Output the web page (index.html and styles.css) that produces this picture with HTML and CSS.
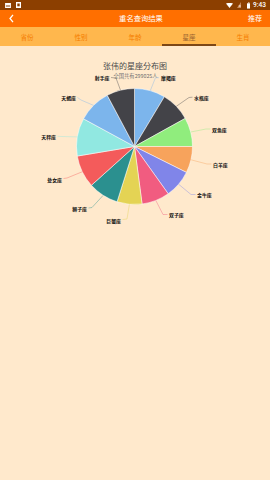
FILE: index.html
```html
<!DOCTYPE html>
<html lang="zh">
<head>
<meta charset="utf-8">
<title>重名查询结果</title>
<link rel="stylesheet" href="styles.css">
</head>
<body>
<div class="app">
  <div class="status">
    <div class="status-left">
      <svg class="ico-a" viewBox="0 0 7 6"><rect x="0" y="0" width="7" height="6" fill="#fff"/><rect x="1" y="3" width="5" height="1.2" fill="#8c3f00"/></svg>
      <svg class="ico-b" viewBox="0 0 5 6"><rect x="0" y="0" width="5" height="6" fill="#fff"/><rect x="1.3" y="1.5" width="2.4" height="2.8" fill="#8c3f00"/></svg>
    </div>
    <div class="status-right">
      <svg class="wifi" viewBox="0 0 7 5"><path d="M0 0.6 Q3.5 -1 7 0.6 L3.5 5 Z" fill="#fff"/></svg>
      <svg class="signal" viewBox="0 0 4 6"><path d="M4 0 L4 6 L0 6 Z" fill="#c98a5a"/><path d="M1.8 3 L3.6 5 M3.6 3 L1.8 5" stroke="#fff" stroke-width="0.5"/></svg>
      <svg class="battery" viewBox="0 0 4 7"><rect x="1.2" y="0" width="1.6" height="1" fill="#fff"/><rect x="0" y="1" width="4" height="6" fill="#fff"/></svg>
      <span class="clock">9:43</span>
    </div>
  </div>
  <div class="toolbar">
    <svg class="back" viewBox="0 0 5 9"><path d="M4 0.8 L1 4.5 L4 8.2" fill="none" stroke="#fff" stroke-width="1.3"/></svg>
    <div class="tb-title">重名查询结果</div>
    <div class="tb-action">推荐</div>
  </div>
  <div class="tabs">
    <div class="tab">省份</div>
    <div class="tab">性别</div>
    <div class="tab">年龄</div>
    <div class="tab active">星座</div>
    <div class="tab">生肖</div>
  </div>
  <svg class="chart" viewBox="0 46 270 200" width="270" height="200">
    <text class="c-title" x="135" y="65.7">张伟的星座分布图</text>
    <text class="c-sub" x="135.5" y="75.7">全国共有299025人</text>
    <g class="slices">
      <path d="M134.5 146.5 L134.5 88.5 A58 58 0 0 1 164.37 96.78 Z" fill="#7cb5ec"/>
      <path d="M134.5 146.5 L164.37 96.78 A58 58 0 0 1 185.23 118.38 Z" fill="#434348"/>
      <path d="M134.5 146.5 L185.23 118.38 A58 58 0 0 1 192.5 146.5 Z" fill="#90ed7d"/>
      <path d="M134.5 146.5 L192.5 146.5 A58 58 0 0 1 186.41 172.38 Z" fill="#f7a35c"/>
      <path d="M134.5 146.5 L186.41 172.38 A58 58 0 0 1 168.18 193.72 Z" fill="#8085e9"/>
      <path d="M134.5 146.5 L168.18 193.72 A58 58 0 0 1 142.07 204.0 Z" fill="#f15c80"/>
      <path d="M134.5 146.5 L142.07 204.0 A58 58 0 0 1 117.06 201.81 Z" fill="#e4d354"/>
      <path d="M134.5 146.5 L117.06 201.81 A58 58 0 0 1 91.4 185.31 Z" fill="#2b908f"/>
      <path d="M134.5 146.5 L91.4 185.31 A58 58 0 0 1 77.3 156.07 Z" fill="#f45b5b"/>
      <path d="M134.5 146.5 L77.3 156.07 A58 58 0 0 1 83.53 118.82 Z" fill="#91e8e1"/>
      <path d="M134.5 146.5 L83.53 118.82 A58 58 0 0 1 107.27 95.29 Z" fill="#7cb5ec"/>
      <path d="M134.5 146.5 L107.27 95.29 A58 58 0 0 1 134.5 88.5 Z" fill="#434348"/>
    </g>
    <g class="connectors">
      <polyline points="159,77.7 155.5,77.7 150.3,90.6" stroke="#7cb5ec"/>
      <polyline points="192.5,97.2 189,97.5 176.3,106.3" stroke="#434348"/>
      <polyline points="210.5,129 206,129 190.8,132" stroke="#90ed7d"/>
      <polyline points="211.5,164 207,164 191,159.8" stroke="#f7a35c"/>
      <polyline points="195.5,194.5 191,194.5 178.7,184.3" stroke="#8085e9"/>
      <polyline points="167.5,214.5 163,214.5 155.9,200.6" stroke="#f15c80"/>
      <polyline points="122.5,219.5 127,219 129.4,204.4" stroke="#e4d354"/>
      <polyline points="88.5,208 92,207.5 103.1,195.4" stroke="#2b908f"/>
      <polyline points="63.5,178.5 67,178 82.2,171.8" stroke="#f45b5b"/>
      <polyline points="57.5,136.3 62,136.5 77.3,136.9" stroke="#91e8e1"/>
      <polyline points="77.5,97.5 81,100 93.6,105.4" stroke="#7cb5ec"/>
      <polyline points="111,77.5 116,78 120.5,90.2" stroke="#434348"/>
    </g>
    <g class="labels">
      <text class="lbl" x="161" y="77.7">摩羯座</text>
      <text class="lbl" x="194" y="97">水瓶座</text>
      <text class="lbl" x="212" y="129">双鱼座</text>
      <text class="lbl" x="213" y="164">白羊座</text>
      <text class="lbl" x="197" y="194.5">金牛座</text>
      <text class="lbl" x="169" y="214.5">双子座</text>
      <text class="lbl end" x="121" y="220">巨蟹座</text>
      <text class="lbl end" x="87" y="208">狮子座</text>
      <text class="lbl end" x="62" y="179">处女座</text>
      <text class="lbl end" x="56" y="136">天秤座</text>
      <text class="lbl end" x="76" y="97">天蝎座</text>
      <text class="lbl end" x="109.5" y="77">射手座</text>
    </g>
  </svg>
</div>
</body>
</html>
```
FILE: styles.css
```css
html, body {
  margin: 0;
  padding: 0;
}
body {
  background: #ffe9cc;
  font-family: "Noto Sans CJK SC", "Noto Sans", sans-serif;
  width: 270px;
  height: 480px;
  overflow: hidden;
}
.app {
  width: 270px;
}
.status {
  height: 10px;
  background: #8c3f00;
  display: flex;
  align-items: center;
  justify-content: space-between;
  padding: 0 4px 0 5px;
  box-sizing: border-box;
}
.status-left {
  display: flex;
  align-items: center;
  gap: 5px;
}
.ico-a { width: 6px; height: 5px; display: block; }
.ico-b { width: 5px; height: 6px; display: block; }
.status-right {
  display: flex;
  align-items: center;
}
.wifi { width: 7px; height: 5px; display: block; margin-right: 4px; }
.signal { width: 4px; height: 6px; display: block; margin-right: 6px; }
.battery { width: 3.5px; height: 7px; display: block; margin-right: 3px; }
.clock {
  color: #fff;
  font-family: "Roboto", "Liberation Sans", sans-serif;
  font-size: 6.6px;
  font-weight: 500;
  line-height: 10px;
}
.toolbar {
  height: 17px;
  background: #ff6f00;
  display: flex;
  align-items: center;
  padding: 0 8px 0 9px;
  color: #fff;
}
.back {
  width: 5px;
  height: 9px;
  display: block;
}
.tb-title {
  flex: 1;
  text-align: center;
  font-size: 7.3px;
  line-height: 17px;
  margin-left: 20px;
}
.tb-action {
  font-size: 7px;
  line-height: 17px;
}
.tabs {
  display: flex;
  height: 19px;
  background: #ffb74d;
}
.tab {
  flex: 1;
  box-sizing: border-box;
  padding-top: 3px;
  border-bottom: 2px solid transparent;
  display: flex;
  align-items: center;
  justify-content: center;
  font-size: 6.5px;
  color: #f57c00;
}
.tab.active {
  color: #98622f;
  border-bottom-color: #7d4716;
}
.chart {
  display: block;
}
.c-title {
  font-size: 8px;
  fill: #4a4a4a;
  text-anchor: middle;
  dominant-baseline: central;
}
.c-sub {
  font-size: 5.3px;
  fill: #707070;
  text-anchor: middle;
  dominant-baseline: central;
}
.slices path {
  stroke: #ffffff;
  stroke-width: 0.5;
  stroke-linejoin: round;
}
.connectors polyline {
  fill: none;
  stroke-width: 0.5;
  opacity: 0.8;
}
.lbl {
  font-size: 4.9px;
  font-weight: bold;
  fill: #111;
  dominant-baseline: central;
}
.lbl.end {
  text-anchor: end;
}
```
